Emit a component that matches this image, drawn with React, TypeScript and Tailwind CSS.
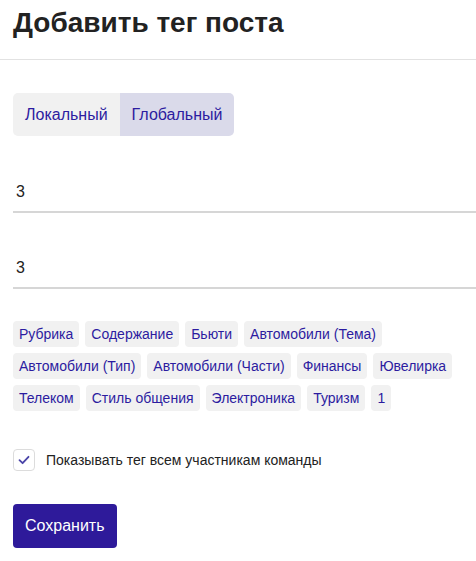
import React, { useState } from "react";

const tags = [
  "Рубрика",
  "Содержание",
  "Бьюти",
  "Автомобили (Тема)",
  "Автомобили (Тип)",
  "Автомобили (Части)",
  "Финансы",
  "Ювелирка",
  "Телеком",
  "Стиль общения",
  "Электроника",
  "Туризм",
  "1",
];

export default function App() {
  const [scope, setScope] = useState<"local" | "global">("global");
  const [name, setName] = useState("3");
  const [slug, setSlug] = useState("3");
  const [shared, setShared] = useState(true);

  return (
    <div
      className="w-[476px] min-h-[561px] bg-white text-[#222]"
      style={{ fontFamily: '"Liberation Sans", Arial, sans-serif' }}
    >
      <header className="h-[60px] border-b border-[#e2e2e2] px-[13px] pt-[7px]">
        <h1 className="text-[28px] leading-[32px] font-bold text-[#222]">Добавить тег поста</h1>
      </header>

      <div className="pl-[13px] pt-[33px]">
        <div className="inline-flex rounded-[5px] overflow-hidden">
          <button
            onClick={() => setScope("local")}
            className={`h-[43px] px-[12px] text-[16px] text-[#2c1ca0] ${
              scope === "local" ? "bg-[#dadaea]" : "bg-[#f1f1f1]"
            }`}
          >
            Локальный
          </button>
          <button
            onClick={() => setScope("global")}
            className={`h-[43px] px-[12px] text-[16px] text-[#2c1ca0] ${
              scope === "global" ? "bg-[#dadaea]" : "bg-[#f1f1f1]"
            }`}
          >
            Глобальный
          </button>
        </div>

        <div className="mt-[35px] flex flex-col gap-[34px]">
          <input
            value={name}
            onChange={(e) => setName(e.target.value)}
            className="h-[42px] w-full border-b-2 border-[#d6d6d6] pl-[3px] pt-[1px] text-[16px] text-[#222] outline-none"
          />
          <input
            value={slug}
            onChange={(e) => setSlug(e.target.value)}
            className="h-[42px] w-full border-b-2 border-[#d6d6d6] pl-[3px] pt-[1px] text-[16px] text-[#222] outline-none"
          />
        </div>

        <div className="mt-[32px] flex flex-wrap gap-x-[6px] gap-y-[6px] pr-[13px]">
          {tags.map((t) => (
            <span
              key={t}
              className="h-[26px] rounded-[4px] bg-[#f1f1f1] px-[6px] text-[14px] leading-[26px] text-[#2c1ca0]"
            >
              {t}
            </span>
          ))}
        </div>

        <label className="mt-[38px] flex items-center gap-[11px] cursor-pointer">
          <span
            onClick={() => setShared(!shared)}
            className="flex h-[22px] w-[22px] items-center justify-center rounded-[4px] border border-[#dcdcdc] bg-white"
          >
            {shared && (
              <svg width="14" height="14" viewBox="0 0 14 14" fill="none">
                <path d="M2.5 7.2 L5.6 10.2 L11.5 3.8" stroke="#4a44a8" strokeWidth="1.8" strokeLinecap="round" strokeLinejoin="round" />
              </svg>
            )}
          </span>
          <span className="text-[14px] text-[#222]">Показывать тег всем участникам команды</span>
        </label>

        <button className="mt-[33px] h-[44px] rounded-[4px] bg-[#2e1a9a] px-[12px] text-[16px] text-white">
          Сохранить
        </button>
      </div>
    </div>
  );
}
